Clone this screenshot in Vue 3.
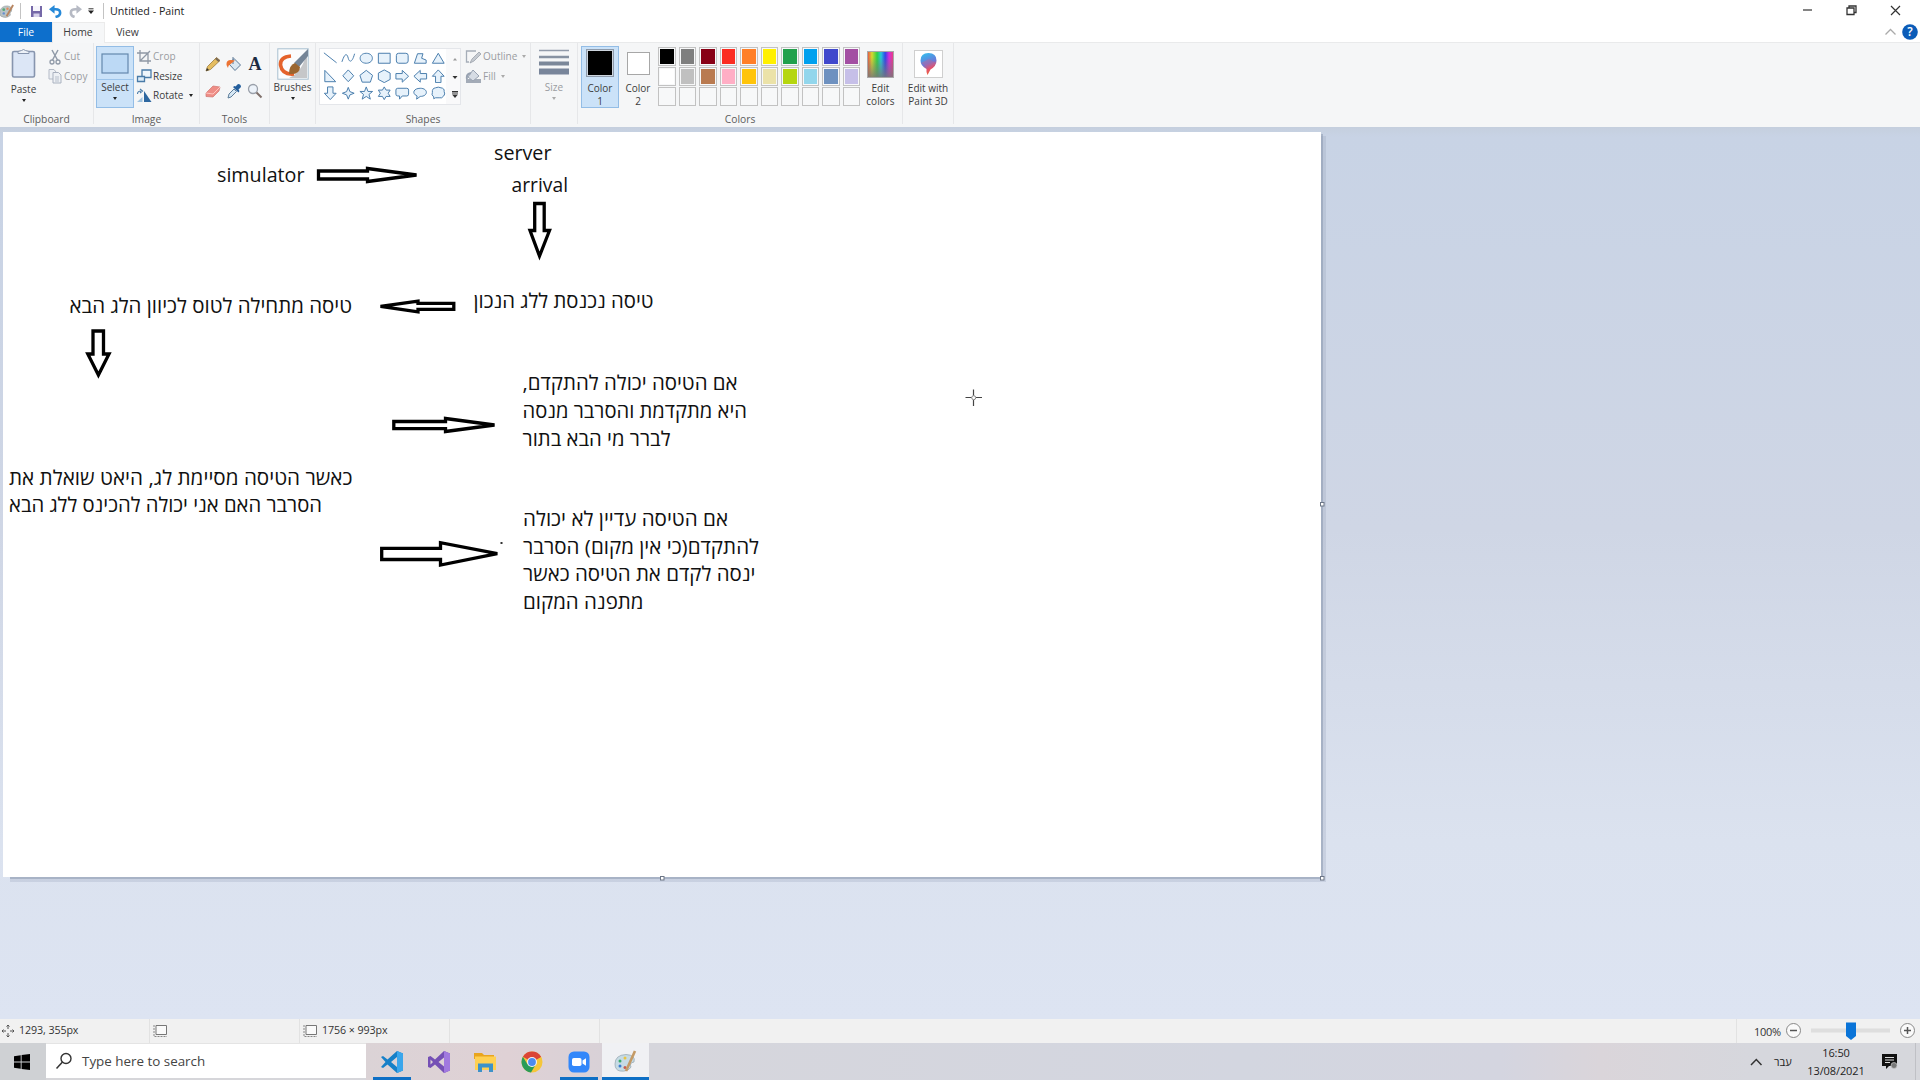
<script setup>
const notes = [
  { x: 217, y: 182, w: 87.5, text: 'simulator' },
  { x: 494, y: 160, w: 57.5, text: 'server' },
  { x: 511.5, y: 191.5, w: 56.5, text: 'arrival' },
  { x: 69.5, y: 312.5, w: 282.5, rtl: true, text: 'טיסה מתחילה לטוס לכיוון הלג הבא' },
  { x: 473.5, y: 307.5, w: 180, rtl: true, text: 'טיסה נכנסת ללג הנכון' },
  { x: 522.5, y: 390, w: 215, rtl: true, text: 'אם הטיסה יכולה להתקדם,' },
  { x: 522.5, y: 418, w: 224.5, rtl: true, text: 'היא מתקדמת והסרבר מנסה' },
  { x: 522.5, y: 445.5, w: 148, rtl: true, text: 'לברר מי הבא בתור' },
  { x: 9, y: 484.5, w: 343.5, rtl: true, text: 'כאשר הטיסה מסיימת לג, היאט שואלת את' },
  { x: 9, y: 512, w: 313, rtl: true, text: 'הסרבר האם אני יכולה להכינס ללג הבא' },
  { x: 523, y: 525.7, w: 205, rtl: true, text: 'אם הטיסה עדיין לא יכולה' },
  { x: 523, y: 553.5, w: 236, rtl: true, text: 'להתקדם(כי אין מקום) הסרבר' },
  { x: 523, y: 581, w: 232.5, rtl: true, text: 'ינסה לקדם את הטיסה כאשר' },
  { x: 523, y: 608.7, w: 120.5, rtl: true, text: 'מתפנה המקום' },
]
const arrows = [
  'M318.5 171H367.5V168.5L416.5 175L367.5 181.5V179H318.5Z',
  'M534.7 203.5H544.2V230.5H549.5L539.5 256L530 230.5H534.7Z',
  'M453.8 303.3H418V301.2L380.500 306.3L418 311.8V309.3H453.8Z',
  'M93 331H103.5V354H109L98.4 375L87.8 354H93Z',
  'M393.8 421.5H445.5V418.5L494.5 425L445.5 431.5V428.7H393.8Z',
  'M381.7 548.3H440.5V542.7L497.3 553.7L440.5 565V559.5H381.7Z',
]
const shapes = [
  'M1 2L15 13',
  'M1 12C5 0 7 4 8 8S12 14 15 3',
  'M8 2.5C17 2.5 17 13.5 8 13.5S-1 2.5 8 2.5Z',
  'M1.5 2.5H14.5V13.5H1.5Z',
  'M4 2.5H12Q14.500 2.500 14.500 5V11Q14.500 13.500 12 13.500H4Q1.500 13.500 1.500 11V5Q1.500 2.500 4 2.500Z',
  'M1.500 13.500L5 3H11L9.500 8L14.500 10V13.500Z',
  'M8 2.500L14.500 13.500H1.500Z',
  'M2 1.500V14H14Z',
  'M8 1L14 7.500L8 14L2 7.500Z',
  'M8 1.500L15 7L12.500 14.500H3.500L1 7Z',
  'M8 1L14.500 4.500V11.500L8 15L1.500 11.500V4.500Z',
  'M1 5H8V1.500L15 8L8 14.500V11H1Z',
  'M15 5H8V1.500L1 8L8 14.500V11H15Z',
  'M5 15V8H1.500L8 1L14.500 8H11V15Z',
  'M5 1V8H1.500L8 15L14.500 8H11V1Z',
  'M8 1.500L9.800 6.200L14.500 8L9.800 9.800L8 14.500L6.200 9.800L1.500 8L6.200 6.200Z',
  'M8 1L9.900 6H15L11 9.300L12.500 14.500L8 11.500L3.500 14.500L5 9.300L1 6H6.100Z',
  'M8 1L10 4.500H14.500L12.300 8L14.500 11.500H10L8 15L6 11.500H1.500L3.700 8L1.500 4.500H6Z',
  'M3 2.500H13Q15 2.500 15 4.500V9Q15 11 13 11H8L5 14.500V11H3Q1 11 1 9V4.500Q1 2.500 3 2.500Z',
  'M8 2.500C17 2.500 17 11.500 8 11.500L4 14.500L4.500 11C-2 8 1 2.500 8 2.500Z',
  'M5 2Q8 .500 11 2Q15 2.500 14.500 6Q16 9 14 11Q12 14 9 13H5L3 14V12Q0 10 1.500 7Q1 2.500 5 2Z',
]
const palette = [
  '#000000', '#7f7f7f', '#880015', '#fb2d22', '#ff7f27', '#fff000', '#22a04c', '#00a0ee', '#4048cc', '#a34fa3',
  '#ffffff', '#c0c0c0', '#b97a50', '#ffaec5', '#ffc40a', '#ebe2a8', '#b5d60f', '#92d6ec', '#6e91c0', '#c6bfe8',
  '', '', '', '', '', '', '', '', '', '',
]
const statusCells = [
  { icon: 'move', text: '1293, 355px' },
  { icon: 'sel', text: '' },
  { icon: 'sel', text: '1756 × 993px' },
  { icon: '', text: '' },
]
</script>

<template>
  <div class="screen">
    <header class="title-bar">
      <svg class="ic pal" viewBox="0 0 16 16"><path d="M0 8Q1 2 8 2Q14 3 12 8Q10 9 11 12Q7 16 1 13Q-1 11 0 8Z" fill="#b9c3c5" stroke="#8c9496" stroke-width=".6" /><circle cx="4" cy="6" r="1.500" fill="#58a978" /><circle cx="8" cy="5" r="1.300" fill="#e28b5e" /><circle cx="4" cy="10" r="1.300" fill="#658fd0" /><path d="M14 1L7 13" stroke="#b88560" stroke-width="2" /></svg>
      <i class="vsep s1"></i>
      <svg class="ic save" viewBox="0 0 13 13"><path d="M1 1H12V12H1Z" fill="#7568a8" /><path d="M3 1H10V6H3Z" fill="#f7f6fc" /><path d="M3.500 8.500H9.500V12H3.500Z" fill="#d7d2ea" /></svg>
      <svg class="ic undo" viewBox="0 0 14 14"><path d="M3 4.500H7Q12 4.500 12 8.500Q12 11.500 7 13" fill="none" stroke="#2689d8" stroke-width="2.800" /><path d="M0 4.500L6 0V9.500Z" fill="#2689d8" /></svg>
      <svg class="ic redo" viewBox="0 0 14 14"><path d="M11 4.500H7Q2 4.500 2 8.500Q2 11.500 6 13" fill="none" stroke="#b6bac4" stroke-width="2.800" /><path d="M14 4.500L8 0V9.500Z" fill="#b6bac4" /></svg>
      <svg class="ic qat" viewBox="0 0 6 6"><path d="M.500 .800H5.500" stroke="#333" /><path d="M0 2.500H6L3 6Z" fill="#222" /></svg>
      <i class="vsep s2"></i>
      <span class="title">Untitled - Paint</span>
      <svg class="win" viewBox="0 0 120 22"><path d="M13 10H22" stroke="#333" stroke-width="1.200" /><path d="M57 8H64V14.500H57Z M59 8V6H66V12.500H64" fill="none" stroke="#333" stroke-width="1.300" /><path d="M101 6L110 15M110 6L101 15" stroke="#333" stroke-width="1.200" /></svg>
    </header>

    <nav class="tabs">
      <span class="tab file">File</span>
      <span class="tab home">Home</span>
      <span class="tab view">View</span>
      <svg class="help" viewBox="0 0 40 21"><path d="M5.500 12.500L10.500 7.500L15.500 12.500" fill="none" stroke="#aaa" stroke-width="1.300" /><circle cx="30" cy="10" r="7.800" fill="#0b5cb8" /><text x="30" y="14.200" text-anchor="middle" fill="#fff" font-size="12" font-weight="600">?</text></svg>
    </nav>

    <section class="ribbon">
      <div class="group clip">
        <div class="body">
          <div class="big">
            <svg width="26" height="32" viewBox="0 0 26 32"><rect x="1.500" y="3.500" width="22" height="25.500" rx="1.500" fill="#dce6f6" stroke="#8795ae" stroke-width="1.600" /><path d="M7 3.500V5.500H18V3.500L14.500 2.500Q12.500 .500 10.500 2.500Z" fill="#eef2f8" stroke="#8795ae" /></svg>
            <span>Paste</span><i class="dd"></i>
          </div>
          <div class="rows dim">
            <div><svg width="16" height="16" viewBox="0 0 16 16"><path d="M5 1L10.500 11M11 1L5.500 11" stroke="#909aa8" stroke-width="1.500" /><circle cx="5" cy="13" r="2" fill="none" stroke="#909aa8" stroke-width="1.300" /><circle cx="11" cy="13" r="2" fill="none" stroke="#909aa8" stroke-width="1.300" /></svg><span>Cut</span></div>
            <div><svg width="16" height="16" viewBox="0 0 16 16"><path d="M2 1.500H7L9 4V11H2Z" fill="#eef1f5" stroke="#b3bac6" /><path d="M6 4.500H11.500L14 7V15H6Z" fill="#eef1f5" stroke="#a9b1bf" /><path d="M8 9H12M8 11H12M8 13H12" stroke="#b7bfcb" /></svg><span>Copy</span></div>
          </div>
        </div>
        <span class="cap">Clipboard</span>
      </div>

      <div class="group image">
        <div class="body">
          <div class="big select">
            <div class="half"><svg width="28" height="21" viewBox="0 0 28 21"><rect x="1" y="1" width="26" height="19" fill="#bcd9f5" stroke="#6488ad" stroke-width="1.200" /></svg></div>
            <span>Select</span><i class="dd"></i>
          </div>
          <div class="rows">
            <div class="dim"><svg width="16" height="16" viewBox="0 0 16 16"><path d="M4 1V12H15M1 4H12V15M4 12L14 2" fill="none" stroke="#8f98a5" stroke-width="1.300" /></svg><span>Crop</span></div>
            <div><svg width="16" height="16" viewBox="0 0 16 16"><path d="M6 2H15V9.500H6Z" fill="#eff6fc" stroke="#4a7ba8" stroke-width="1.300" /><path d="M1.500 8.500H8.500V13.500H1.500Z" fill="#dcecf9" stroke="#4a7ba8" stroke-width="1.300" /></svg><span>Resize</span></div>
            <div><svg width="16" height="16" viewBox="0 0 16 16"><path d="M8 3V14H15.500Z" fill="#2d67a0" /><path d="M6.500 9V14H1Z" fill="#9fc3e0" /><path d="M1.500 6Q1.500 3 5 3M4 1L6.500 3L4 5" fill="none" stroke="#4a7ba8" stroke-width="1.100" /></svg><span>Rotate</span><i class="dd r"></i></div>
          </div>
        </div>
        <span class="cap">Image</span>
      </div>

      <div class="group tools">
        <div class="body tool-grid">
          <svg viewBox="0 0 16 16"><path d="M1 15L2.500 10.500L11.500 1.500L15 4.500L5.500 13.500Z" fill="#e5bd60" stroke="#9b7b3d" stroke-width=".800" /><path d="M1 15L2 12L4 14Z" fill="#333" /><path d="M11.500 1.500L15 4.500L13.500 6L10 3Z" fill="#7b6a55" /></svg>
          <svg viewBox="0 0 16 16"><path d="M8 2.500L14.500 9L9 14.500L3 8Z" fill="#dbe7f1" stroke="#5c7896" /><path d="M7 1V8" stroke="#5c7896" /><path d="M.500 9Q0 4 5 4L9 4.500L4 8.500Q2 9 2 12Z" fill="#ed7332" /></svg>
          <span class="letter">A</span>
          <svg viewBox="0 0 16 16"><path d="M1 10L8 3L15 4L14 8L8 14L1 13.500Z" fill="#ee8d86" stroke="#d07570" stroke-width=".700" /><path d="M1 10L8 11L15 4" fill="none" stroke="#ffc5bf" /></svg>
          <svg viewBox="0 0 16 16"><path d="M2 15L3 11L8 6L10.500 8.500L5 14Z" fill="#d6e7f4" stroke="#5e7e9b" /><path d="M7 4L12.500 9.500L13.500 8L12.500 6.500L15 4Q15 1 12 1L9.500 3.500L8.500 3Z" fill="#245f9d" /></svg>
          <svg viewBox="0 0 16 16"><circle cx="6" cy="6" r="4.500" fill="#edf3fa" stroke="#9aa0aa" stroke-width="1.300" /><path d="M9.500 9.500L14.500 14.500" stroke="#7f706b" stroke-width="2" /></svg>
        </div>
        <span class="cap">Tools</span>
      </div>

      <div class="group brush">
        <div class="big">
          <svg width="32" height="32" viewBox="0 0 32 32"><rect x=".800" y=".800" width="30.400" height="30.400" fill="#fbfcfd" stroke="#a8bfd0" /><path d="M30 3V30H12Q26 24 30 3Z" fill="#c6c7c9" /><path d="M14 8Q3 9 3.500 17Q5 27 17 26" fill="none" stroke="#e4622b" stroke-width="3.600" /><path d="M31 1V8L22 19L17 15Z" fill="#758597" /><path d="M18 15Q12 17 12 26Q23 27 23 19Z" fill="#9b6630" /></svg>
          <span>Brushes</span><i class="dd"></i>
        </div>
      </div>

      <div class="group shapes">
        <div class="body">
          <div class="gallery">
            <div class="shape-grid"><svg v-for="(d, i) in shapes" :key="i" viewBox="0 0 16 16"><path :d="d" :fill="i < 2 ? 'none' : '#e7f2fb'" stroke="#4c7fae" stroke-width="1.100" /></svg></div>
            <div class="scroll"><svg width="8" height="56" viewBox="0 0 8 56"><path d="M2 11.500H6L4 9Z" fill="#999" /><path d="M1.500 27H6.500L4 30Z" fill="#333" /><path d="M1 42.500H7M1 44H7" stroke="#333" /><path d="M1 45.500H7L4 49Z" fill="#333" /></svg></div>
          </div>
          <div class="rows dim">
            <div><svg width="17" height="16" viewBox="0 0 17 16"><path d="M11 2H1.500V13H4" fill="none" stroke="#a5adb8" stroke-width="1.300" /><path d="M5 14L7 10L14 3L16 5L9 12Z" fill="#c5cad1" stroke="#9299a4" stroke-width=".700" /></svg><span>Outline</span><i class="dd r"></i></div>
            <div><svg width="17" height="16" viewBox="0 0 17 16"><path d="M1 11H16V15H1Z" fill="#a3abb7" /><path d="M8 2L14 8L8 13L3 9Z" fill="#d6dce4" stroke="#98a2b1" /><path d="M2 11Q1 6 6 5" fill="none" stroke="#98a2b1" stroke-width="2" /></svg><span>Fill</span><i class="dd r"></i></div>
          </div>
        </div>
        <span class="cap">Shapes</span>
      </div>

      <div class="group size">
        <div class="big dim">
          <svg width="30" height="32" viewBox="0 0 30 32"><path d="M0 1.500H30" stroke="#929baa" stroke-width="1.500" /><path d="M0 8H30" stroke="#8792a2" stroke-width="2.500" /><path d="M0 14.500H30" stroke="#7b8799" stroke-width="4" /><path d="M0 22.500H30" stroke="#78859a" stroke-width="6" /></svg>
          <span>Size</span><i class="dd"></i>
        </div>
      </div>

      <div class="group colors">
        <div class="body">
          <div class="pick on"><i class="sw c1"></i><span>Color<br />1</span></div>
          <div class="pick"><i class="sw c2"></i><span>Color<br />2</span></div>
          <div class="palette"><i v-for="(c, i) in palette" :key="i"><b :style="{ background: c }"></b></i></div>
          <div class="pick edit">
            <svg width="27" height="27" viewBox="0 0 27 27"><defs><linearGradient id="rain"><stop offset="0" stop-color="#e94949" /><stop offset=".170" stop-color="#d7d92e" /><stop offset=".370" stop-color="#2fcf45" /><stop offset=".520" stop-color="#27c7da" /><stop offset=".680" stop-color="#3046e8" /><stop offset=".830" stop-color="#d42bdd" /><stop offset="1" stop-color="#e84377" /></linearGradient><linearGradient id="fade" x2="0" y2="1"><stop offset=".200" stop-color="#777" stop-opacity="0" /><stop offset="1" stop-color="#777" stop-opacity=".850" /></linearGradient></defs><rect x=".500" y=".500" width="26" height="26" fill="url(#rain)" stroke="#a9a9a9" /><rect x="1" y="1" width="25" height="25" fill="url(#fade)" /></svg>
            <span>Edit<br />colors</span>
          </div>
        </div>
        <span class="cap">Colors</span>
      </div>

      <div class="group p3d">
        <div class="pick edit">
          <svg width="29" height="28" viewBox="0 0 29 28"><defs><linearGradient id="pin" x1=".400" x2=".700" y2="1"><stop offset="0" stop-color="#38b6ec" /><stop offset=".450" stop-color="#6a78d8" /><stop offset=".700" stop-color="#e3506b" /><stop offset="1" stop-color="#ee6a2c" /></linearGradient></defs><rect x=".500" y=".500" width="28" height="27" fill="#fff" stroke="#cfcfcf" /><path d="M14.500 3Q22.500 3 22.500 10.500Q22.500 16 16.500 19.500L13.500 25Q12 22 12.500 19Q6.500 16 6.500 10.500Q6.500 3 14.500 3Z" fill="url(#pin)" /><path d="M7 13L15 9L22 13L16 19Z" fill="#ef5575" opacity=".300" /></svg>
          <span>Edit with<br />Paint 3D</span>
        </div>
      </div>
    </section>

    <main class="workspace">
      <svg class="canvas" width="1330" height="758" viewBox="0 127 1330 758">
        <path d="M10 879.500H1323.500V136" fill="none" stroke="#8f9db5" stroke-opacity=".25" stroke-width="5" />
        <path d="M10 878H1322V134" fill="none" stroke="#8795ab" stroke-opacity=".5" stroke-width="2" />
        <rect x="3" y="132" width="1318" height="745" fill="#fff" />
        <g fill="none" stroke="#000" stroke-width="3.300"><path v-for="d in arrows" :key="d" :d="d" /></g>
        <text v-for="n in notes" :key="n.text" :x="n.x" :y="n.y" :textLength="n.w" lengthAdjust="spacingAndGlyphs" :direction="n.rtl ? 'rtl' : 'ltr'" :text-anchor="n.rtl ? 'end' : 'start'">{{ n.text }}</text>
        <rect x="500.500" y="542" width="2" height="2" fill="#333" />
        <path d="M965.500 397.500H971.500M976 397.500H982M973.500 389.500V395.500M973.500 400V406" stroke="#444" stroke-width="1.200" /><circle cx="973.700" cy="397.700" r="2" fill="none" stroke="#777" stroke-width=".900" />
        <g fill="#fff" stroke="#6d7686"><rect x="1320.500" y="502.500" width="3.500" height="3.500" /><rect x="1320.500" y="876.500" width="3.500" height="3.500" /><rect x="660.500" y="876.500" width="3.500" height="3.500" /></g>
      </svg>
    </main>

    <footer class="status">
      <div v-for="(c, i) in statusCells" :key="i" class="cell">
        <svg v-if="c.icon === 'move'" width="14" height="14" viewBox="0 0 14 14"><path d="M7 1V5M7 9V13M1 7H5M9 7H13M5.500 2.500L7 1L8.500 2.500M5.500 11.500L7 13L8.500 11.500M2.500 5.500L1 7L2.500 8.500M11.500 5.500L13 7L11.500 8.500" fill="none" stroke="#555" /></svg>
        <svg v-if="c.icon === 'sel'" width="15" height="14" viewBox="0 0 15 14"><path d="M3 1.500H13.500V10.500H3Z" fill="#fafafa" stroke="#777" /><path d="M1 1V12.500H14" fill="none" stroke="#888" stroke-dasharray="2 1" /></svg>
        <span>{{ c.text }}</span>
      </div>
      <div class="zoom">
        <span>100%</span>
        <svg width="134" height="24" viewBox="0 0 134 24"><circle cx="8.500" cy="11.500" r="7" fill="#fafafa" stroke="#888" /><path d="M5 11.500H12" stroke="#555" stroke-width="1.500" /><path d="M26 11.500H105" stroke="#dedede" stroke-width="4" /><path d="M61 3.500H71V17L66 21L61 17Z" fill="#0a74d8" /><circle cx="122.500" cy="11.500" r="7" fill="#fafafa" stroke="#888" /><path d="M119 11.500H126M122.500 8V15" stroke="#555" stroke-width="1.500" /></svg>
      </div>
    </footer>

    <div class="taskbar">
      <div class="start"><svg width="16" height="16" viewBox="0 0 16 16"><path d="M0 2.300L6.700 1.300V7.500H0ZM7.600 1.100L16 0V7.500H7.600ZM0 8.400H6.700V14.700L0 13.700ZM7.600 8.400H16V16L7.600 14.900Z" /></svg></div>
      <div class="search"><svg width="18" height="18" viewBox="0 0 18 18"><circle cx="11" cy="6.500" r="5" fill="none" stroke="#333" stroke-width="1.400" /><path d="M7.500 10L1.500 16.500" stroke="#333" stroke-width="1.500" /></svg><span>Type here to search</span></div>
      <div class="apps">
        <div class="app a1"><svg viewBox="0 0 24 24"><path d="M17 1L23 3.500V20.500L17 23L7.500 14.500L3 18L1 17L5.500 12L1 7L3 6L7.500 9.500ZM17 7L11 12L17 17Z" fill="#1680c8" fill-rule="evenodd" /><path d="M17 1L23 3.500V20.500L17 23Z" fill="#3aa6ec" /></svg></div>
        <div class="app"><svg viewBox="0 0 24 24"><path d="M17 1L23 3.500V20.500L17 23L8 14.500L3.500 18L1 17V7L3.500 6L8 9.500ZM17 7.500L11.500 12L17 16.500ZM3.500 9.500V14.500L6 12Z" fill="#7550b5" fill-rule="evenodd" /><path d="M17 1L23 3.500V20.500L17 23Z" fill="#a179df" /></svg></div>
        <div class="app"><svg viewBox="0 0 24 24"><path d="M1 3H9L11 5H21V9H1Z" fill="#e9a51e" /><path d="M2 6.500H23V20H2Z" fill="#ffd052" /><path d="M5 22V13.500H20V22H16V17.500H9V22Z" fill="#3d92c9" /></svg></div>
        <div class="app"><svg viewBox="0 0 24 24"><circle cx="12" cy="12" r="10.500" fill="#f5c63a" /><path d="M2.900 6.800A10.500 10.500 0 0 1 21.100 6.800L12 12Z" fill="#db4437" /><path d="M2.900 6.800A10.500 10.500 0 0 0 11 22.500L16 14L12 12L7.500 14.300Z" fill="#299c57" /><path d="M21.100 6.800H12V12Z" fill="#db4437" /><circle cx="12" cy="12" r="5" fill="#f5f5f5" /><circle cx="12" cy="12" r="3.900" fill="#4c8bf0" /></svg></div>
        <div class="app a5"><svg viewBox="0 0 24 24"><rect x="1.500" y="1.500" width="21" height="21" rx="5.500" fill="#3287fa" /><rect x="5" y="8" width="9.500" height="8" rx="1.800" fill="#fff" /><path d="M15.500 10.500L19 8.300V15.700L15.500 13.500Z" fill="#fff" /></svg></div>
        <div class="app a6"><svg viewBox="0 0 24 24"><path d="M1 14Q1 5 12 4.500Q22 5 20 12Q15 13 17 17Q14 22 6 21Q1 20 1 14Z" fill="#c6dbe5" stroke="#8fa2ac" stroke-width=".700" /><circle cx="6" cy="11" r="1.500" fill="#3aab6b" /><circle cx="11" cy="8" r="1.500" fill="#e9c442" /><circle cx="6" cy="16" r="1.500" fill="#3b7dd1" /><circle cx="11" cy="17.500" r="1.500" fill="#c75d50" /><path d="M21 1L12 21" stroke="#c49a65" stroke-width="2.600" /></svg></div>
      </div>
      <div class="tray">
        <svg width="14" height="10" viewBox="0 0 14 10"><path d="M2 8L7.300 2.500L12.500 8" fill="none" stroke="#333" stroke-width="1.500" /></svg>
        <span class="lang">עבר</span>
        <span class="clock">16:50<br />13/08/2021</span>
        <svg class="note" width="18" height="18" viewBox="0 0 18 18"><path d="M1 1H16V13H8L5 16V13H1Z" fill="#111" /><path d="M4 4.500H13M4 7H13M4 9.500H9" stroke="#ddd" /><circle cx="13" cy="12.500" r="3" fill="#777" stroke="#ccc" stroke-width=".700" /></svg>
        <i class="peek"></i>
      </div>
    </div>
  </div>
</template>

<style>
body { margin: 0; overflow: hidden; }
</style>

<style scoped>
* { box-sizing: border-box; }
.screen { width: 1920px; height: 1080px; display: flex; flex-direction: column; overflow: hidden; background: #fff; color: #3c3c3c; font: 10.7px/13px "Open Sans", "Noto Sans", sans-serif; }
svg { display: block; flex: none; }
.title-bar { height: 22px; display: flex; align-items: center; flex: none; }
.ic { height: 13px; width: 13px; }
.pal { width: 15px; height: 15px; }
.vsep { width: 1px; height: 16px; background: #c3c3c3; }
.s1 { margin-left: 5px; }
.save { margin-left: 9px; }
.undo { margin-left: 6px; }
.redo { margin-left: 7px; }
.qat { width: 6px; height: 6px; margin-left: 6px; }
.s2 { margin: 0 6px 0 9px; }
.title { color: #222; white-space: nowrap; }
.win { width: 120px; height: 22px; margin-left: auto; margin-right: 10px; }
.tabs { height: 21px; flex: none; display: flex; border-bottom: 1px solid #e9eaeb; font-size: 10.400px; line-height: 20px; }
.tab { text-align: center; }
.file { width: 52px; background: #0d6fcc; color: #fff; }
.home { width: 53px; height: 21px; background: #f6f7f8; border: 1px solid #ebebeb; border-bottom: 0; line-height: 19px; padding-right: 1px; }
.view { width: 45px; }
.help { width: 40px; height: 21px; margin-left: auto; }
.ribbon { height: 84px; flex: none; display: flex; background: #f5f6f7; font-size: 10px; }
.group { display: flex; flex-direction: column; border-right: 1px solid #e6e7e9; height: 81px; flex: none; }
.body { height: 69px; display: flex; padding-top: 3px; flex: none; }
.cap { text-align: center; color: #5d5d5d; line-height: 14px; font-size: 10.300px; }
.dim { color: #9a9ca1; }
.dd { display: block; border: 2.5px solid transparent; border-top: 3px solid #222; border-bottom: 0; width: 0; }
.dim .dd { border-top-color: #aaa; }
.big { display: flex; flex-direction: column; align-items: center; padding-top: 2px; }
.big span { margin-top: 3px; line-height: 13px; }
.big .dd { margin-top: 3px; }
.clip { width: 94px; }
.clip .big { width: 47px; }
.rows { display: flex; flex-direction: column; padding-top: 1px; }
.rows > div { display: flex; align-items: center; height: 19.5px; gap: 1px; white-space: nowrap; }
.dd.r { margin-left: 4px; }
.image { width: 106px; }
.image .body { padding-left: 2px; }
.select { width: 38px; height: 62px; padding: 0; background: #cbe2f8; border: 1px solid #93bde6; }
.half { width: 36px; height: 33px; display: flex; align-items: center; justify-content: center; border-bottom: 1px solid #9dc4ea; }
.select span { margin-top: 1px; }
.image .rows { padding-left: 2px; }
.tools { width: 70px; }
.tool-grid { display: grid; grid-template-columns: repeat(3, 16px); grid-template-rows: 16px 16px; column-gap: 5px; row-gap: 11px; padding: 13px 0 0 5px; }
.tool-grid svg { width: 16px; height: 16px; }
.letter { font: bold 18px/17px "Liberation Serif", serif; color: #1d2b42; text-align: center; }
.brush { width: 46px; }
.brush .big { padding-top: 5px; }
.brush .big span { margin-top: 1px; }
.shapes { width: 215px; }
.shapes .body { padding: 5px 0 0 3px; }
.gallery { width: 142px; height: 57px; background: #fff; border: 1px solid #e4e6ea; display: flex; }
.shape-grid { width: 127px; display: grid; grid-template-columns: repeat(7, 18px); grid-template-rows: repeat(3, 17.5px); padding-top: 1px; }
.shape-grid svg { width: 14.5px; height: 14.5px; margin: 1px 0 0 3px; }
.scroll { width: 14px; padding-left: 5px; background: #f9f9fa; }
.shapes .rows { padding-left: 4px; margin-top: -2px; }
.size { width: 47px; }
.size .big { padding-top: 6px; }
.size .big span { margin-top: 0; }
.colors { width: 325px; }
.colors .body { padding-left: 3px; }
.pick { width: 38px; height: 62px; display: flex; flex-direction: column; align-items: center; justify-content: flex-end; text-align: center; white-space: nowrap; }
.pick.on { background: #cbe2f8; border: 1px solid #93bde6; }
.pick.on span { margin-bottom: -1px; }
.sw { display: block; }
.c1 { width: 28px; height: 28px; background: #000; border: 1.500px solid #8e9bab; outline: 1px solid #cdd5de; outline-offset: -2px; margin-bottom: 5px; }
.c2 { width: 23px; height: 23px; background: #fff; border: 1px solid #a7a7a7; margin-bottom: 7px; }
.palette { display: grid; grid-template-columns: repeat(10, 17.800px); grid-template-rows: repeat(3, 18.500px); column-gap: 2.730px; row-gap: 1.700px; margin: 1px 2px 0 1px; }
.palette i { border: 1px solid #c2c2c2; padding: 1px; background: #f7f8f9; display: flex; }
.palette b { flex: 1; }
.edit { width: 36px; }
.edit svg { margin-bottom: 4px; }
.p3d { width: 51px; padding-top: 3px; align-items: center; }
.workspace { flex: 1; background: linear-gradient(#c5cfde 0, #c8d3e5 10px, #cfd6e5 45%, #dbe2ef 80%, #dde4f2); min-height: 0; }
.canvas text { font: 20.5px "Open Sans", "Noto Sans", sans-serif; fill: #111; }
.status { height: 24px; flex: none; background: #f1f1f1; display: flex; align-items: center; font-size: 10.700px; color: #333; }
.cell { width: 150px; height: 24px; border-right: 1px solid #e2e2e2; display: flex; align-items: center; gap: 4px; padding-left: 3px; letter-spacing: -.1px; }
.cell span { margin-top: -1px; }
.cell:first-child { padding-left: 1px; }
.zoom { margin-left: auto; width: 184px; height: 24px; border-left: 1px solid #e2e2e2; display: flex; align-items: center; padding-left: 17px; gap: 4px; font-size: 11px; letter-spacing: -.3px; }
.taskbar { height: 37px; flex: none; background: linear-gradient(90deg, #d6d6d9 0, #d6d6dc 650px, #d3d6e0 1240px, #d4d5e0 1500px, #dad5da 1600px, #d6d7dd 1750px, #d6d7dc); display: flex; }
.start { width: 46px; background: #cfd1d4; display: flex; align-items: center; justify-content: center; }
.start svg { margin-left: -2px; }
.search { width: 320px; height: 35px; background: #fff; border-top: 1px solid #e4e4e4; display: flex; align-items: center; padding-left: 9px; gap: 9px; font-size: 13.400px; color: #444; }
.apps { display: flex; background: linear-gradient(90deg, #dbd3d6, #dfd1d5 50%, #d5d1d8); padding-left: 3px; }
.app { width: 46.600px; height: 37px; display: flex; align-items: center; justify-content: center; padding-top: 1px; }
.app svg { width: 24px; height: 24px; }
.a1, .a5, .a6 { background: linear-gradient(#0d6fc5, #0d6fc5) no-repeat center bottom / 38px 3px; }
.a6 { background: #0d6fc5 linear-gradient(#f0f1f4, #f0f1f4) no-repeat 0 0 / 100% 34px; padding-left: 2px; }
.tray { margin-left: auto; width: 171px; display: flex; align-items: center; font-size: 11px; color: #222; }
.lang { margin-left: 11px; width: 20px; }
.clock { margin-left: 10px; width: 64px; text-align: center; line-height: 17.500px; letter-spacing: -.1px; }
.note { margin-left: 13px; }
.peek { width: 1px; height: 37px; background: #bfc0c5; margin-left: auto; margin-right: 4px; }
</style>
